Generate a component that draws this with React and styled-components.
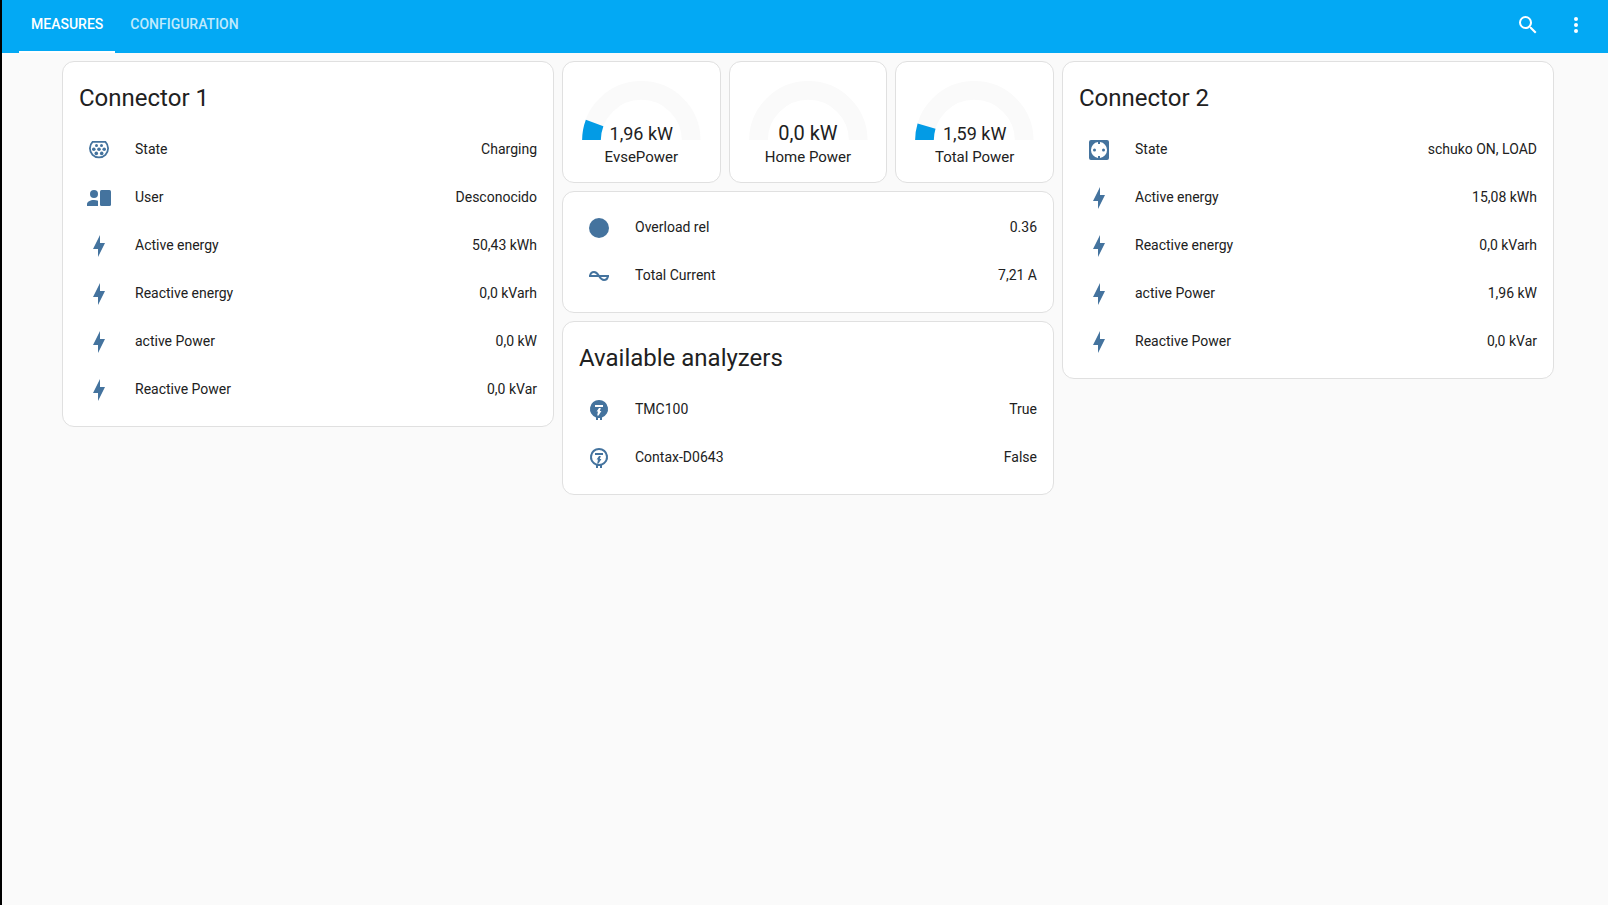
import React from "react";
import styled, { createGlobalStyle } from "styled-components";

const icons = {
  bolt: <path d="M11 15H6L13 1V9H18L11 23V15Z" />,
  type2: (
    <>
      <path
        fill="none"
        stroke="currentColor"
        strokeWidth="1.8"
        d="M5.6 3.9H18.4A9.1 9.1 0 1 1 5.6 3.9Z"
      />
      <circle cx="9.5" cy="7.5" r="1.5" />
      <circle cx="14.5" cy="7.5" r="1.5" />
      <circle cx="6.8" cy="11.2" r="1.8" />
      <circle cx="12" cy="11.2" r="1.8" />
      <circle cx="17.2" cy="11.2" r="1.8" />
      <circle cx="9.3" cy="15.4" r="1.8" />
      <circle cx="14.7" cy="15.4" r="1.8" />
    </>
  ),
  user: (
    <>
      <circle cx="7" cy="8" r="4" />
      <path d="M0 20V18C0 15.79 3.13 14 7 14C8.5 14 9.87 14.27 11 14.72V20Z" />
      <rect x="13" y="4" width="11" height="16" rx="1.5" />
    </>
  ),
  circle: <circle cx="12" cy="12" r="10" />,
  sine: (
    <path
      fill="none"
      stroke="currentColor"
      strokeWidth="2"
      d="M2 12H22M3 12C3.4 9.4 4.8 8 7 8C9.5 8 10.8 10 12 12S14.5 16 17 16C19.2 16 20.6 14.6 21 12"
    />
  ),
  schuko: (
    <path
      fillRule="evenodd"
      d="M4 2H20A2 2 0 0 1 22 4V20A2 2 0 0 1 20 22H4A2 2 0 0 1 2 20V4A2 2 0 0 1 4 2ZM11 4.06A8 8 0 0 0 11 19.94V18H13V19.94A8 8 0 0 0 13 4.06V6H11ZM7.5 10.5A1.5 1.5 0 1 1 7.5 13.5A1.5 1.5 0 1 1 7.5 10.5ZM16.5 10.5A1.5 1.5 0 1 1 16.5 13.5A1.5 1.5 0 1 1 16.5 10.5Z"
    />
  ),
  meter: (
    <path
      fillRule="evenodd"
      d="M12 2A9 9 0 0 1 15 19.5V22H13V20H11V22H9V19.5A9 9 0 0 1 12 2ZM8 7V9H16V7ZM12 10L9.6 13.6H11L10.2 17.4H11.6L14.4 13H12.8L13.8 10Z"
    />
  ),
  meterOutline: (
    <path
      fillRule="evenodd"
      d="M12 2A9 9 0 0 1 15 19.5V22H13V20H11V22H9V19.5A9 9 0 0 1 12 2ZM12 4A7 7 0 0 0 12 18A7 7 0 0 0 12 4ZM8 7V9H16V7ZM12 10L9.6 13.6H11L10.2 17.4H11.6L14.4 13H12.8L13.8 10Z"
    />
  ),
  magnify: (
    <path d="M9.5,3A6.5,6.5 0 0,1 16,9.5C16,11.11 15.41,12.59 14.44,13.73L14.71,14H15.5L20.5,19L19,20.5L14,15.5V14.71L13.73,14.44C12.59,15.41 11.11,16 9.5,16A6.5,6.5 0 0,1 3,9.5A6.5,6.5 0 0,1 9.5,3M9.5,5C7,5 5,7 5,9.5C5,12 7,14 9.5,14C12,14 14,12 14,9.5C14,7 12,5 9.5,5Z" />
  ),
  dots: (
    <>
      <circle cx="12" cy="6" r="2" />
      <circle cx="12" cy="12" r="2" />
      <circle cx="12" cy="18" r="2" />
    </>
  ),
};

const connector1 = [
  { icon: "type2", name: "State", value: "Charging" },
  { icon: "user", name: "User", value: "Desconocido" },
  { icon: "bolt", name: "Active energy", value: "50,43 kWh" },
  { icon: "bolt", name: "Reactive energy", value: "0,0 kVarh" },
  { icon: "bolt", name: "active Power", value: "0,0 kW" },
  { icon: "bolt", name: "Reactive Power", value: "0,0 kVar" },
];

const connector2 = [
  { icon: "schuko", name: "State", value: "schuko ON, LOAD" },
  { icon: "bolt", name: "Active energy", value: "15,08 kWh" },
  { icon: "bolt", name: "Reactive energy", value: "0,0 kVarh" },
  { icon: "bolt", name: "active Power", value: "1,96 kW" },
  { icon: "bolt", name: "Reactive Power", value: "0,0 kVar" },
];

const load = [
  { icon: "circle", name: "Overload rel", value: "0.36" },
  { icon: "sine", name: "Total Current", value: "7,21 A" },
];

const analyzers = [
  { icon: "meter", name: "TMC100", value: "True" },
  { icon: "meterOutline", name: "Contax-D0643", value: "False" },
];

const gauges = [
  { name: "EvsePower", power: 1.96, label: "1,96 kW" },
  { name: "Home Power", power: 0, label: "0,0 kW", large: true },
  { name: "Total Power", power: 1.59, label: "1,59 kW" },
];

const MAX_POWER = 17.25;

const Icon = ({ name }) => (
  <Svg viewBox="0 0 24 24" aria-hidden="true">
    {icons[name]}
  </Svg>
);

const Entities = ({ title, rows }) => (
  <Card>
    {title && <Title>{title}</Title>}
    <List $untitled={!title}>
      {rows.map((row) => (
        <Row key={row.name}>
          <IconBox>
            <Icon name={row.icon} />
          </IconBox>
          <Name>{row.name}</Name>
          <Value>{row.value}</Value>
        </Row>
      ))}
    </List>
  </Card>
);

// filled slice of the dial, from the left end up to the current power
const slice = (power) => {
  const angle = (power / MAX_POWER) * Math.PI;
  const x = Math.cos(angle);
  const y = Math.sin(angle);
  return `M-47.5 0A47.5 47.5 0 0 1 ${-47.5 * x} ${-47.5 * y}L${-32.5 * x} ${-32.5 * y}A32.5 32.5 0 0 0 -32.5 0Z`;
};

const Gauge = ({ name, power, label, large }) => (
  <GaugeCard>
    <Dial>
      <svg viewBox="-50 -50 100 50" aria-hidden="true">
        <path d="M-40 0A40 40 0 0 1 40 0" fill="none" stroke="#fafafa" strokeWidth="15" />
        {power > 0 && <path d={slice(power)} fill="#039be5" />}
      </svg>
      <GaugeValue $large={large}>{label}</GaugeValue>
    </Dial>
    <GaugeName>{name}</GaugeName>
  </GaugeCard>
);

const App = () => {
  return (
    <>
      <GlobalStyle />
      <Page>
        <Header>
          <Tabs>
            <Tab href="#measures" $active aria-current="page">MEASURES</Tab>
            <Tab href="#configuration">CONFIGURATION</Tab>
          </Tabs>
          <Actions>
            <IconButton type="button" aria-label="Search"><Icon name="magnify" /></IconButton>
            <IconButton type="button" aria-label="Menu"><Icon name="dots" /></IconButton>
          </Actions>
        </Header>
        <Columns>
          <Column>
            <Entities title="Connector 1" rows={connector1} />
          </Column>
          <Column>
            <Gauges>
              {gauges.map((gauge) => <Gauge key={gauge.name} {...gauge} />)}
            </Gauges>
            <Entities rows={load} />
            <Entities title="Available analyzers" rows={analyzers} />
          </Column>
          <Column>
            <Entities title="Connector 2" rows={connector2} />
          </Column>
        </Columns>
      </Page>
    </>
  );
};

const GlobalStyle = createGlobalStyle`
  *{
    box-sizing:border-box;
  }
  body{
    margin:0;
    background:#fafafa;
    color:#212121;
    font-family:Roboto, "Noto Sans", sans-serif;
    font-size:14px;
    line-height:20px;
  }
`;

const Page = styled.div`
  min-height:100vh;
  border-left:2px solid #000;
`;

const Header = styled.header`
  display:flex;
  justify-content:space-between;
  height:53px;
  padding:0 8px 0 17px;
  background:#03a9f4;
`;

const Tabs = styled.nav`
  display:flex;
  gap:3px;
`;

const Tab = styled.a`
  display:flex;
  align-items:center;
  padding:0 12px 4px;
  border-bottom:2px solid ${(p) => (p.$active ? "#fff" : "transparent")};
  color:${(p) => (p.$active ? "#fff" : "#c0eafc")};
  font-weight:500;
  text-decoration:none;
`;

const Actions = styled.div`
  display:flex;
  align-items:flex-start;
`;

const IconButton = styled.button`
  display:grid;
  place-items:center;
  width:48px;
  height:50px;
  padding:0;
  border:0;
  background:none;
  color:#fff;
  cursor:pointer;
`;

const Svg = styled.svg`
  display:block;
  width:24px;
  height:24px;
  fill:currentColor;
`;

const Columns = styled.main`
  display:flex;
  justify-content:center;
  align-items:flex-start;
  gap:8px;
  padding:8px 0 8px 6px;
`;

const Column = styled.div`
  display:flex;
  flex-direction:column;
  gap:8px;
  flex:1 1 0;
  min-width:0;
  max-width:492px;
`;

const Card = styled.section`
  border:1px solid #e0e0e0;
  border-radius:12px;
  background:#fff;
`;

const Title = styled.h1`
  margin:0;
  padding:12px 16px 8px;
  font-size:24px;
  font-weight:400;
  line-height:48px;
`;

const List = styled.div`
  display:flex;
  flex-direction:column;
  gap:8px;
  padding:${(p) => (p.$untitled ? "16px" : "0 16px 16px")};
`;

const Row = styled.div`
  display:flex;
  align-items:center;
  height:40px;
`;

const IconBox = styled.div`
  display:grid;
  place-items:center;
  width:40px;
  color:#44739e;
`;

const Name = styled.span`
  flex:1;
  padding:0 16px 2px;
`;

const Value = styled.span`
  padding-bottom:2px;
`;

const Gauges = styled.div`
  display:grid;
  grid-template-columns:repeat(3, 1fr);
  gap:8px;
`;

const GaugeCard = styled(Card)`
  height:122px;
  padding:16px;
  text-align:center;
`;

const Dial = styled.div`
  position:relative;
  svg{
    display:block;
    width:100%;
  }
`;

const GaugeValue = styled.div`
  position:absolute;
  left:0;
  right:0;
  bottom:${(p) => (p.$large ? "-3px" : "-4px")};
  font-size:${(p) => (p.$large ? "20px" : "18px")};
  line-height:20px;
`;

const GaugeName = styled.div`
  margin-top:7px;
  font-size:15px;
`;

export default App;
